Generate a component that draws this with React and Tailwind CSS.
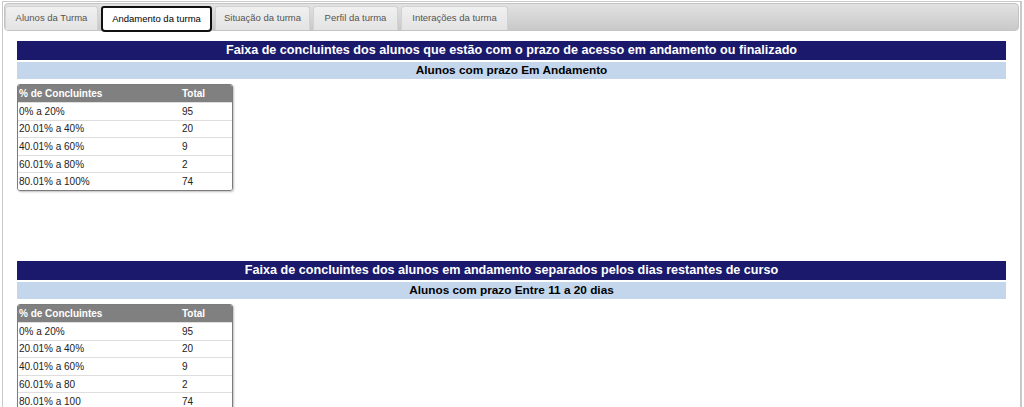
import React from 'react';

const tabs = [
  { label: 'Alunos da Turma', width: 'w-[93px]' },
  { label: 'Andamento da turma', width: 'w-[111px]', active: true },
  { label: 'Situação da turma', width: 'w-[95px]' },
  { label: 'Perfil da turma', width: 'w-[85px]' },
  { label: 'Interações da turma', width: 'w-[107px]' },
];

const sections = [
  {
    title: 'Faixa de concluintes dos alunos que estão com o prazo de acesso em andamento ou finalizado',
    subtitle: 'Alunos com prazo Em Andamento',
    rows: [
      ['0% a 20%', '95'],
      ['20.01% a 40%', '20'],
      ['40.01% a 60%', '9'],
      ['60.01% a 80%', '2'],
      ['80.01% a 100%', '74'],
    ],
  },
  {
    title: 'Faixa de concluintes dos alunos em andamento separados pelos dias restantes de curso',
    subtitle: 'Alunos com prazo Entre 11 a 20 dias',
    rows: [
      ['0% a 20%', '95'],
      ['20.01% a 40%', '20'],
      ['40.01% a 60%', '9'],
      ['60.01% a 80', '2'],
      ['80.01% a 100', '74'],
    ],
  },
];

function Section({ title, subtitle, rows }) {
  return (
    <div>
      <div className="flex h-[19px] items-center justify-center bg-[#1a196b] text-[12.6px] font-bold text-white">{title}</div>
      <div className="mt-[2px] flex h-[17px] items-center justify-center bg-[#c4d6ec] text-[11.8px] font-bold text-black">{subtitle}</div>
      <div className="mt-[5px] w-[216px] overflow-hidden rounded-[3px] border border-[#7b7b7b] shadow-[1px_1px_2px_rgba(0,0,0,0.25)]">
        <div className="flex h-[17px] items-center bg-[#808080] text-[10px] font-bold text-white">
          <div className="w-[164px] pl-[1px]">% de Concluintes</div>
          <div>Total</div>
        </div>
        {rows.map(([range, total]) => (
          <div key={range} className="flex h-[17.6px] items-center border-t border-[#dedede] bg-white text-[10px] text-[#222]">
            <div className="w-[164px] pl-[1px]">{range}</div>
            <div>{total}</div>
          </div>
        ))}
      </div>
    </div>
  );
}

export default function App() {
  return (
    <div className="h-[407px] w-[1024px] overflow-hidden bg-white font-['Liberation_Sans',Arial,sans-serif]">
      <div className="ml-[2px] mt-[1px] h-[420px] w-[1020px] border border-r-2 border-[#c9c9c9] p-[1px]">
        <div className="flex h-[28px] items-end gap-[3px] rounded-[4px] border border-[#c4c4c4] bg-gradient-to-b from-[#e2e2e2] to-[#c9c9c9]">
          {tabs.map((tab) => (
            <div
              key={tab.label}
              className={`flex items-center justify-center rounded-t-[3px] text-[9.5px] ${tab.width} ${
                tab.active
                  ? 'mb-[-2px] h-[26px] rounded-[4px] border-2 border-[#111] bg-white text-black'
                  : 'h-[24px] border border-b-0 border-[#d2d2d2] bg-gradient-to-b from-[#f0f0f0] to-[#e3e3e3] text-[#555]'
              }`}
            >
              {tab.label}
            </div>
          ))}
        </div>
        <div className="pl-[13px] pr-[13px] pt-[10px]">
          <Section {...sections[0]} />
          <div className="h-[70px]" />
          <Section {...sections[1]} />
        </div>
      </div>
    </div>
  );
}
